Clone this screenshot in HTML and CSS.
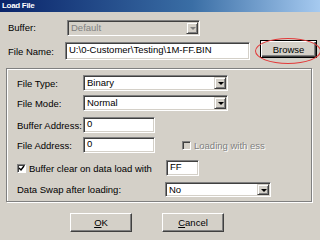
FILE: index.html
```html
<!DOCTYPE html>
<html lang="en">
<head>
  <meta charset="UTF-8">
  <title>Load File</title>
  <link rel="stylesheet" href="styles.css">
</head>
<body>
  <div class="dialog">
    <div class="titlebar">Load File</div>

    <div class="top">
      <div class="row row-buffer">
        <span class="label w59">Buffer:</span>
        <div class="combo disabled w133"><span class="value">Default</span><span class="arrow"></span></div>
      </div>
      <div class="row row-file">
        <span class="label w57">File Name:</span>
        <div class="field w185 name">U:\0-Customer\Testing\1M-FF.BIN</div>
        <button class="btn browse">Browse</button>
      </div>
    </div>

    <div class="group">
      <div class="row">
        <span class="label w66">File Type:</span>
        <div class="combo w145"><span class="value">Binary</span><span class="arrow"></span></div>
      </div>
      <div class="row gap4">
        <span class="label w66">File Mode:</span>
        <div class="combo w145"><span class="value">Normal</span><span class="arrow"></span></div>
      </div>
      <div class="row gap6">
        <span class="label w66">Buffer Address:</span>
        <div class="field w72">0</div>
      </div>
      <div class="row gap4">
        <span class="label w66">File Address:</span>
        <div class="field w72">0</div>
        <span class="check off"></span>
        <span class="label muted">Loading with ess</span>
      </div>
      <div class="row gap7">
        <span class="check on">
          <svg viewBox="0 0 7 7" width="7" height="7"><path d="M1 3l2 2 3-4" fill="none" stroke="#000" stroke-width="1.4"/></svg>
        </span>
        <span class="label w137">Buffer clear on data load with</span>
        <div class="field w33">FF</div>
      </div>
      <div class="row gap6">
        <span class="label w148">Data Swap after loading:</span>
        <div class="combo w106 short"><span class="value">No</span><span class="arrow"></span></div>
      </div>
    </div>

    <div class="buttons">
      <button class="btn"><u>O</u>K</button>
      <button class="btn"><u>C</u>ancel</button>
    </div>

    <div class="mark"></div>
  </div>
</body>
</html>
```

FILE: styles.css
```css
body {
  margin: 0;
  background-color: #d4d0c8;
  font-family: "Liberation Sans", Arial, sans-serif;
  font-size: 9.5px;
  color: #000000;
}

.dialog {
  width: 320px;
  height: 240px;
  position: relative;
  overflow: hidden;
}

.titlebar {
  height: 12px;
  line-height: 12px;
  padding-left: 2px;
  background: linear-gradient(to right, #0a246a 0%, #3a6ea5 60%, #a6caf0 100%);
  color: #ffffff;
  font-weight: bold;
  font-size: 8px;
  letter-spacing: -0.3px;
}

.top {
  padding: 7px 0 0 8px;
}

.row {
  display: flex;
  align-items: center;
}

.row-buffer {
  height: 17px;
}

.row-file {
  margin-top: 4px;
  align-items: flex-start;
}

.label {
  white-space: nowrap;
}

.w57 { width: 57px; margin-top: 6px; }
.w59 { width: 59px; }
.w66 { width: 66px; }
.w137 { width: 137px; }
.w148 { width: 148px; }

.muted {
  color: #808080;
  text-shadow: 1px 1px 0 #ffffff;
}

/* sunken edit box */
.field {
  box-sizing: border-box;
  height: 16px;
  line-height: 12px;
  padding-left: 3px;
  background: #ffffff;
  border: 1px solid;
  border-color: #808080 #ffffff #ffffff #808080;
  box-shadow: inset 1px 1px 0 #404040, inset -1px -1px 0 #d4d0c8;
  white-space: nowrap;
  overflow: hidden;
}

.field.name {
  height: 18px;
  line-height: 14px;
  margin-top: 2px;
}

.w33 { width: 33px; }
.w72 { width: 72px; }
.w185 { width: 185px; }

/* drop-down list */
.combo {
  box-sizing: border-box;
  height: 16px;
  display: flex;
  background: #ffffff;
  border: 1px solid;
  border-color: #808080 #ffffff #ffffff #808080;
  box-shadow: inset 1px 1px 0 #404040, inset -1px -1px 0 #d4d0c8;
  padding: 1px;
}

.combo.short {
  height: 15px;
}

.combo .value {
  flex: 1;
  padding-left: 2px;
  line-height: 12px;
}

.combo .arrow {
  width: 12px;
  box-sizing: border-box;
  background: #d4d0c8;
  border: 1px solid;
  border-color: #d4d0c8 #404040 #404040 #d4d0c8;
  box-shadow: inset 1px 1px 0 #ffffff, inset -1px -1px 0 #808080;
  position: relative;
}

.combo .arrow::after {
  content: "";
  position: absolute;
  left: 3px;
  top: 4px;
  border-left: 3px solid transparent;
  border-right: 3px solid transparent;
  border-top: 3px solid #000000;
}

.combo.disabled {
  background: #d4d0c8;
  color: #808080;
}

.combo.disabled .arrow::after {
  border-top-color: #808080;
}

.w106 { width: 106px; }
.w133 { width: 133px; }
.w145 { width: 145px; }

.btn {
  box-sizing: border-box;
  height: 19px;
  width: 62px;
  padding: 0;
  font: inherit;
  color: #000000;
  background: #d4d0c8;
  border: 1px solid;
  border-color: #ffffff #404040 #404040 #ffffff;
  box-shadow: inset -1px -1px 0 #808080;
}

.btn u {
  text-decoration: underline;
}

.browse {
  width: 57px;
  height: 18px;
  margin-left: 10px;
  border: 1px solid #000000;
  box-shadow: inset 1px 1px 0 #ffffff, inset -1px -1px 0 #404040, inset -2px -2px 0 #808080;
}

/* etched group box */
.group {
  box-sizing: border-box;
  margin: 8px 0 0 6px;
  width: 306px;
  height: 134px;
  padding: 6px 0 0 10px;
  border: 1px solid #808080;
  box-shadow: inset 1px 1px 0 #ffffff, 1px 1px 0 #ffffff;
}

.gap4 { margin-top: 4px; }
.gap6 { margin-top: 6px; }
.gap7 { margin-top: 7px; }

.check {
  box-sizing: border-box;
  width: 9px;
  height: 9px;
  border: 1px solid;
  border-color: #808080 #ffffff #ffffff #808080;
  box-shadow: inset 1px 1px 0 #404040;
  background: #ffffff;
  margin-right: 3px;
  display: flex;
  align-items: center;
  justify-content: center;
}

.check.off {
  margin-left: 27px;
  background: #d4d0c8;
}

.check.on {
  margin-right: 3px;
}

.buttons {
  display: flex;
  gap: 30px;
  padding: 11px 0 0 70px;
}

/* red annotation circle around Browse */
.mark {
  position: absolute;
  left: 255px;
  top: 38px;
  width: 66px;
  height: 26px;
  box-sizing: border-box;
  border: 1.5px solid #e23a3a;
  border-radius: 50%;
}
```
